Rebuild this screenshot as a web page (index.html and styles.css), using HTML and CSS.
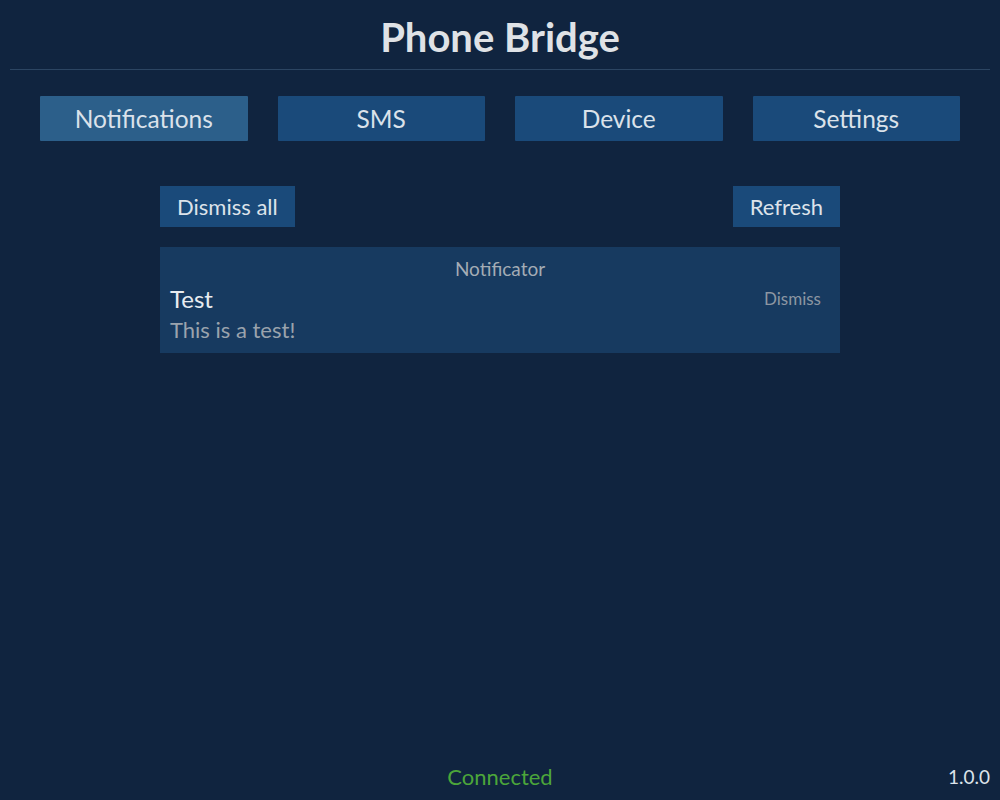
FILE: index.html
```html
<!DOCTYPE html>
<html>
<head>
<meta charset="utf-8">
<link rel="stylesheet" href="styles.css">
</head>
<body>
<div class="app">
  <header class="header">
    <h1 class="title">Phone Bridge</h1>
  </header>
  <nav class="tabs">
    <button class="tab active">Notifications</button>
    <button class="tab">SMS</button>
    <button class="tab">Device</button>
    <button class="tab">Settings</button>
  </nav>
  <main class="content">
    <div class="toolbar">
      <button class="btn">Dismiss all</button>
      <button class="btn">Refresh</button>
    </div>
    <div class="card">
      <div class="card-app">Notificator</div>
      <div class="card-row">
        <span class="card-title">Test</span>
        <span class="card-dismiss">Dismiss</span>
      </div>
      <div class="card-body">This is a test!</div>
    </div>
  </main>
  <footer class="footer">
    <span class="status">Connected</span>
    <span class="version">1.0.0</span>
  </footer>
</div>
</body>
</html>
```
FILE: styles.css
```css
* { box-sizing: border-box; }
html, body { margin: 0; height: 100%; }
body {
  background: #10243f;
  font-family: Lato, "Open Sans", sans-serif;
  color: #dde3ea;
}
.app {
  height: 800px;
  display: flex;
  flex-direction: column;
  padding: 0 10px;
}
.header {
  border-bottom: 1px solid #2c4562;
  height: 70px;
  display: flex;
  align-items: center;
  justify-content: center;
}
.title {
  margin: 0;
  font-size: 40px;
  font-weight: 700;
  color: #dfe2e6;
  padding-top: 4px;
}
.tabs {
  display: flex;
  gap: 30px;
  padding: 26px 30px 0;
}
.tab {
  flex: 1;
  height: 45px;
  border: none;
  border-radius: 1px;
  background: #1a4a7a;
  color: #dbe2ea;
  font-family: inherit;
  font-size: 24.5px;
  padding: 0;
}
.tab.active { background: #2c5f8a; }
.content {
  flex: 1;
  width: 680px;
  margin: 45px auto 0;
}
.toolbar {
  display: flex;
  justify-content: space-between;
  margin-bottom: 20px;
}
.btn {
  height: 41px;
  border: none;
  background: #1a4a7a;
  color: #dde3ea;
  font-family: inherit;
  font-size: 22px;
  padding: 0 17px;
}
.card {
  background: #173a60;
  height: 106px;
  padding: 11px 19px 0 10px;
}
.card-app {
  text-align: center;
  font-size: 19px;
  color: #a4acb5;
  line-height: 22px;
  margin-right: -9px;
}
.card-row {
  display: flex;
  justify-content: space-between;
  align-items: center;
  line-height: 32px;
  margin-top: 3px;
}
.card-title { font-size: 24px; color: #e8ecf0; }
.card-dismiss { font-size: 17px; color: #8c96a2; }
.card-body { font-size: 22px; color: #9aa3ad; line-height: 30px; }
.footer {
  position: relative;
  height: 48px;
  display: flex;
  align-items: center;
  justify-content: center;
}
.status { color: #4ca63a; font-size: 22px; }
.version {
  position: absolute;
  right: 0;
  font-size: 19px;
  color: #dde3ea;
}
```
